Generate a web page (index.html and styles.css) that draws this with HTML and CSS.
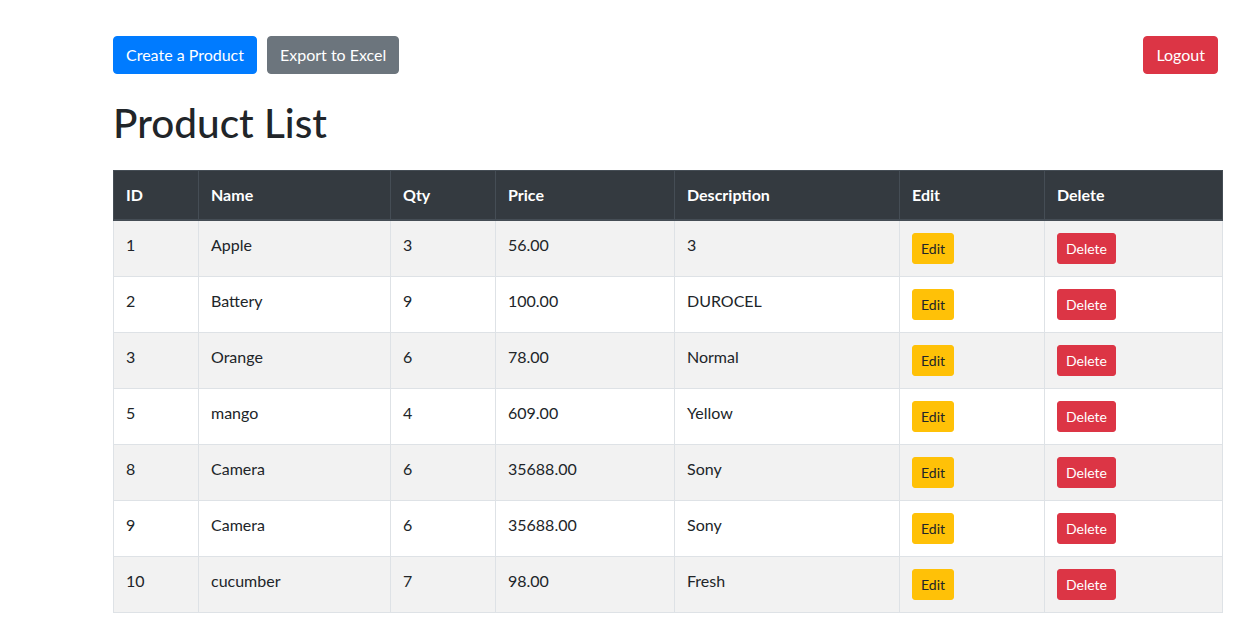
FILE: index.html
```html
<!DOCTYPE html>
<html lang="en">
<head>
<meta charset="utf-8">
<title>Product List</title>
<link rel="stylesheet" href="styles.css">
</head>
<body>
<div class="container">
  <div class="toolbar">
    <div class="toolbar-left">
      <a class="btn btn-primary" href="#">Create a Product</a>
      <a class="btn btn-secondary" href="#">Export to Excel</a>
    </div>
    <a class="btn btn-danger" href="#">Logout</a>
  </div>
  <h1 class="title">Product List</h1>
  <table class="table">
    <colgroup>
      <col class="c-id"><col class="c-name"><col class="c-qty"><col class="c-price"><col class="c-desc"><col class="c-edit"><col class="c-del">
    </colgroup>
    <thead>
      <tr><th>ID</th><th>Name</th><th>Qty</th><th>Price</th><th>Description</th><th>Edit</th><th>Delete</th></tr>
    </thead>
    <tbody>
      <tr><td>1</td><td>Apple</td><td>3</td><td>56.00</td><td>3</td><td><a class="btn btn-sm btn-warning" href="#">Edit</a></td><td><a class="btn btn-sm btn-danger" href="#">Delete</a></td></tr>
      <tr><td>2</td><td>Battery</td><td>9</td><td>100.00</td><td>DUROCEL</td><td><a class="btn btn-sm btn-warning" href="#">Edit</a></td><td><a class="btn btn-sm btn-danger" href="#">Delete</a></td></tr>
      <tr><td>3</td><td>Orange</td><td>6</td><td>78.00</td><td>Normal</td><td><a class="btn btn-sm btn-warning" href="#">Edit</a></td><td><a class="btn btn-sm btn-danger" href="#">Delete</a></td></tr>
      <tr><td>5</td><td>mango</td><td>4</td><td>609.00</td><td>Yellow</td><td><a class="btn btn-sm btn-warning" href="#">Edit</a></td><td><a class="btn btn-sm btn-danger" href="#">Delete</a></td></tr>
      <tr><td>8</td><td>Camera</td><td>6</td><td>35688.00</td><td>Sony</td><td><a class="btn btn-sm btn-warning" href="#">Edit</a></td><td><a class="btn btn-sm btn-danger" href="#">Delete</a></td></tr>
      <tr><td>9</td><td>Camera</td><td>6</td><td>35688.00</td><td>Sony</td><td><a class="btn btn-sm btn-warning" href="#">Edit</a></td><td><a class="btn btn-sm btn-danger" href="#">Delete</a></td></tr>
      <tr><td>10</td><td>cucumber</td><td>7</td><td>98.00</td><td>Fresh</td><td><a class="btn btn-sm btn-warning" href="#">Edit</a></td><td><a class="btn btn-sm btn-danger" href="#">Delete</a></td></tr>
    </tbody>
  </table>
</div>
</body>
</html>
```

FILE: styles.css
```css
* { box-sizing: border-box; }
html, body { margin: 0; padding: 0; }
body {
  font-family: Lato, "Open Sans", sans-serif;
  font-size: 16px;
  line-height: 1.5;
  color: #212529;
  background: #fff;
}
.container {
  width: 1110px;
  margin-left: 113px;
  padding-top: 36px;
}
.toolbar {
  display: flex;
  justify-content: space-between;
  align-items: center;
  padding-right: 5px;
}
.toolbar-left { display: flex; gap: 10px; }
.btn {
  display: inline-block;
  padding: 6px 12px;
  font-size: 16px;
  line-height: 24px;
  border: 1px solid transparent;
  border-radius: 4px;
  text-decoration: none;
  color: #fff;
  white-space: nowrap;
}
.btn-primary { background: #007bff; border-color: #007bff; }
.btn-secondary { background: #6c757d; border-color: #6c757d; }
.btn-danger { background: #dc3545; border-color: #dc3545; }
.btn-warning { background: #ffc107; border-color: #ffc107; color: #212529; }
.btn-sm {
  padding: 4px 8px;
  font-size: 14px;
  line-height: 21px;
  border-radius: 3px;
}
.title {
  font-size: 40.5px;
  font-weight: 500;
  line-height: 48px;
  margin: 25px 0 23px;
}
.table {
  width: 1109px;
  border-collapse: collapse;
  table-layout: fixed;
}
.c-id { width: 85px; }
.c-name { width: 192px; }
.c-qty { width: 105px; }
.c-price { width: 179px; }
.c-desc { width: 225px; }
.c-edit { width: 145px; }
.c-del { width: 178px; }
.table th, .table td {
  padding: 12px;
  text-align: left;
  vertical-align: top;
  border: 1px solid #dee2e6;
}
.table thead th {
  background: #343a40;
  color: #fff;
  font-weight: 700;
  border-color: #454d55;
  border-bottom-width: 2px;
}
.table tbody tr:nth-child(odd) { background: #f2f2f2; }
```
